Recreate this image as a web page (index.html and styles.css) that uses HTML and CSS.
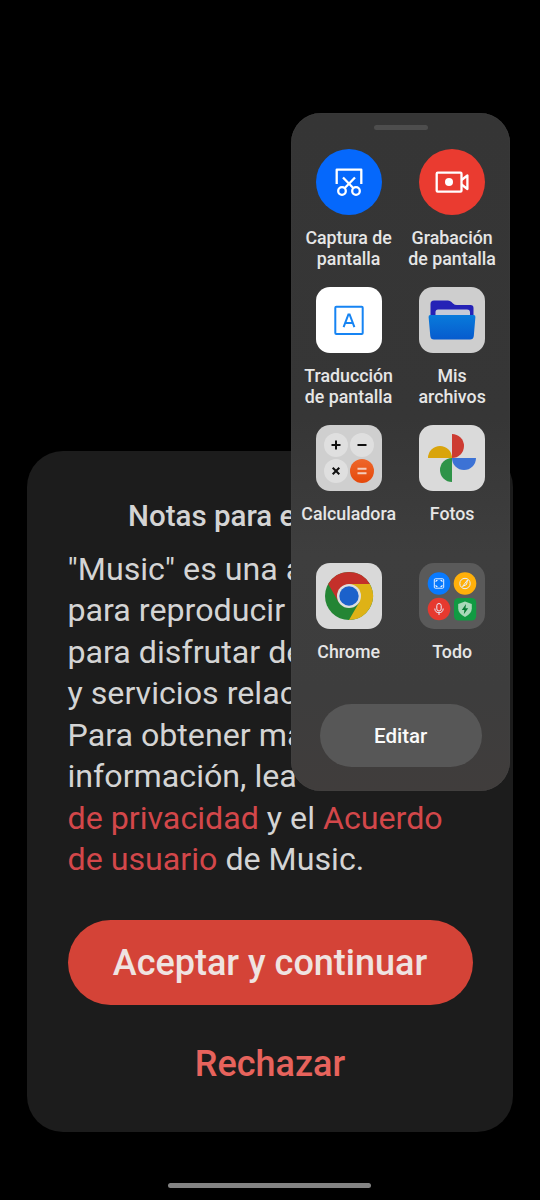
FILE: index.html
```html
<!DOCTYPE html>
<html lang="es">
<head>
<meta charset="utf-8">
<meta name="viewport" content="width=device-width">
<title>Music</title>
<link rel="stylesheet" href="styles.css">
</head>
<body>
<main class="screen">
  <section class="dialog">
    <h1 class="dialog-title">Notas para e</h1>
    <div class="dialog-text">
      <div>"Music" es una a</div>
      <div>para reproducir</div>
      <div>para disfrutar de</div>
      <div>y servicios relac</div>
      <div>Para obtener má</div>
      <div>información, lea</div>
      <div><a class="link">de privacidad</a> y el <a class="link">Acuerdo</a></div>
      <div><a class="link">de usuario</a> de Music.</div>
    </div>
    <button class="accept">Aceptar y continuar</button>
    <button class="reject">Rechazar</button>
  </section>
  <div class="home-bar"></div>

  <aside class="panel">
    <div class="handle"></div>
    <div class="grid">
      <div class="item">
        <svg class="icon" viewBox="0 0 66 66">
          <circle cx="33" cy="33" r="33" fill="#0568fc"/>
          <g fill="none" stroke="#fff" stroke-width="2.3">
            <path d="M20.7 35V20.7H45.3V35" stroke-linejoin="round"/>
            <path d="M27 28.5L37.2 39M39 28.5L28.8 39"/>
            <circle cx="26" cy="42" r="3.8"/><circle cx="40" cy="42" r="3.8"/>
          </g>
        </svg>
        <span class="label">Captura de<br>pantalla</span>
      </div>
      <div class="item">
        <svg class="icon" viewBox="0 0 66 66">
          <circle cx="33" cy="33" r="33" fill="#ea3b30"/>
          <g fill="none" stroke="#fff" stroke-width="2.3" stroke-linejoin="round">
            <rect x="17.7" y="23.7" width="24.8" height="19" rx="1"/>
            <path d="M42.5 31L48.4 26.5V40L42.5 35.5"/>
          </g>
          <circle cx="30" cy="33" r="4" fill="#fff"/>
        </svg>
        <span class="label">Grabación<br>de pantalla</span>
      </div>
      <div class="item">
        <svg class="icon" viewBox="0 0 66 66">
          <rect width="66" height="66" rx="14" fill="#fff"/>
          <g fill="none" stroke="#1684f3" stroke-width="2">
            <rect x="19.3" y="19.7" width="27.4" height="27.4" rx="1"/>
            <path d="M27.6 40.2L32.4 27.4H33.6L38.4 40.2M29.3 36H36.7"/>
          </g>
        </svg>
        <span class="label">Traducción<br>de pantalla</span>
      </div>
      <div class="item">
        <svg class="icon" viewBox="0 0 66 66">
          <defs><linearGradient id="folder" x2="0" y2="1"><stop stop-color="#087bdb"/><stop offset="1" stop-color="#075bce"/></linearGradient></defs>
          <rect width="66" height="66" rx="14" fill="#cecece"/>
          <path d="M11.5 29V17Q11.5 13.5 15 13.5H29Q31 13.5 32.5 15L34 16.5Q35.5 18 38 18H51.5Q54.5 18 54.5 21V30H11.5Z" fill="#2522b6"/>
          <path d="M16.5 28V25Q16.5 22.5 19 22.5H48Q51 22.5 51 25.5V29Z" fill="#c5cad7"/>
          <path d="M11.3 28H54.7Q56.6 28 56.4 30L54.8 49Q54.4 52.5 51 52.5H15Q11.7 52.5 11.3 49L9.6 30Q9.4 28 11.3 28Z" fill="url(#folder)"/>
        </svg>
        <span class="label">Mis<br>archivos</span>
      </div>
      <div class="item">
        <svg class="icon" viewBox="0 0 66 66">
          <defs><linearGradient id="equals" x2="0" y2="1"><stop stop-color="#ee672b"/><stop offset="1" stop-color="#e5480a"/></linearGradient></defs>
          <rect width="66" height="66" rx="14" fill="#cfcfcf"/>
          <g fill="#dfdfdf"><circle cx="20" cy="20" r="12"/><circle cx="46" cy="20" r="12"/><circle cx="20" cy="46" r="12"/></g>
          <circle cx="46" cy="46" r="12" fill="url(#equals)"/>
          <g fill="none" stroke="#101010" stroke-width="2">
            <path d="M15.5 20H24.5M20 15.5V24.5M41.5 20H50.5M16.7 42.7L23.3 49.3M23.3 42.7L16.7 49.3"/>
            <path d="M41.5 43.8H50.5M41.5 48.2H50.5" stroke="#f4cdbd"/>
          </g>
        </svg>
        <span class="label">Calculadora</span>
      </div>
      <div class="item">
        <svg class="icon" viewBox="0 0 66 66">
          <rect width="66" height="66" rx="14" fill="#dadada"/>
          <path d="M33 33V9A12 12 0 0 1 33 33Z" fill="#cd3b32"/>
          <path d="M33 33H57A12 12 0 0 1 33 33Z" fill="#3c72d5"/>
          <path d="M33 33V57A12 12 0 0 1 33 33Z" fill="#2e9348"/>
          <path d="M33 33H9A12 12 0 0 1 33 33Z" fill="#d9a40b"/>
        </svg>
        <span class="label">Fotos</span>
      </div>
      <div class="item">
        <svg class="icon" viewBox="0 0 66 66">
          <rect width="66" height="66" rx="14" fill="#d9d9d9"/>
          <circle cx="33" cy="33" r="24" fill="#248534"/>
          <path d="M33 21H53.8A24 24 0 0 1 33 57L43.4 39Z" fill="#deb216"/>
          <path d="M12.2 21A24 24 0 0 1 53.8 21H33L22.6 39Z" fill="#c4302a"/>
          <circle cx="33" cy="33" r="12" fill="#dedede"/>
          <circle cx="33" cy="33" r="9.7" fill="#1b61cb"/>
        </svg>
        <span class="label">Chrome</span>
      </div>
      <div class="item">
        <svg class="icon" viewBox="0 0 66 66">
          <rect width="66" height="66" rx="15" fill="#5a5a5a"/>
          <circle cx="20" cy="20.5" r="11.3" fill="#087aff"/>
          <circle cx="46" cy="20.5" r="11.3" fill="#ffb00a"/>
          <circle cx="20" cy="46" r="11.3" fill="#e6392f"/>
          <rect x="35" y="35" width="22.2" height="22.5" rx="4.5" fill="#119a42"/>
          <g fill="none" stroke="#e8f0ff" stroke-width="1">
            <rect x="15.3" y="15.8" width="9.4" height="9.4" rx="1"/>
            <path d="M17 19V17.5H18.5M21.5 17.5H23V19M23 22V23.5H21.5M18.5 23.5H17V22"/>
            <circle cx="46" cy="20.5" r="5.2"/>
            <path d="M43.5 23.5L48.5 17M43.5 23.5L47.5 21.5L48.5 17"/>
            <rect x="17.8" y="40.5" width="4.4" height="7.5" rx="2.2"/>
            <path d="M15.8 45.5Q16 49.7 20 49.7Q24 49.7 24.2 45.5M20 49.7V52"/>
          </g>
          <path d="M46 38.5L52.8 41V45.5Q52.8 50.5 46 54Q39.2 50.5 39.2 45.5V41Z" fill="#a9d9b9"/>
          <path d="M47 41L42.8 47H45.4L44.8 51.3L49.2 45.3H46.5Z" fill="#087b34"/>
        </svg>
        <span class="label">Todo</span>
      </div>
    </div>
    <button class="edit">Editar</button>
  </aside>
</main>
</body>
</html>
```
FILE: styles.css
```css
* { box-sizing: border-box; }
body { margin: 0; background: #000; font-family: Roboto, "Liberation Sans", sans-serif; }
button { border: 0; padding: 0; font-family: inherit; font-weight: 500; display: block; }

.screen {
  position: relative;
  width: 540px;
  height: 1200px;
  overflow: hidden;
  padding: 451px 27px 0;
  background: #000;
}
.dialog {
  height: 681px;
  padding: 45px 40px 0;
  border-radius: 36px;
  background: #1c1c1c;
  color: #d4d4d4;
}
.dialog-title {
  margin: 0 0 0 61px;
  font-size: 29.5px;
  line-height: 40px;
  font-weight: 500;
  white-space: nowrap;
}
.dialog-text {
  margin: 12.5px 0 0 0.5px;
  font-size: 32.2px;
  line-height: 41.5px;
  white-space: nowrap;
}
.link { color: #d3474a; }
.accept {
  width: 405px;
  height: 85px;
  margin: 39.5px 0 0 0.5px;
  border-radius: 43px;
  background: #d44337;
  color: #efe3e1;
  font-size: 36px;
}
.reject {
  margin: 35px auto 0;
  background: none;
  color: #e7635c;
  font-size: 36px;
  line-height: 48px;
}
.home-bar {
  width: 203px;
  height: 5px;
  margin: 51px auto 0 141px;
  border-radius: 3px;
  background: #838383;
}

/* Floating sidebar above the dialog */
.panel {
  position: absolute;
  left: 291.4px;
  top: 113.4px;
  width: 219px;
  height: 678px;
  padding: 12px 6px 0 5.5px;
  border-radius: 30px;
  background: linear-gradient(#353535 0, #363636 45%, #3e3e3e 65%, #3d3d3d 85%, #403d3c 100%);
  box-shadow: inset 0 0 1px #555;
}
.handle {
  width: 54px;
  height: 5px;
  margin: 0 auto;
  border-radius: 3px;
  background: #4d4d4d;
}
.grid {
  display: grid;
  grid-template-columns: 103.5px 103.5px;
  grid-auto-rows: 138px;
  margin-top: 19px;
}
.item { display: flex; flex-direction: column; align-items: center; }
.icon { width: 66px; height: 66px; display: block; }
.label {
  margin-top: 11.5px;
  color: #e6e6e6;
  font-size: 17.8px;
  font-weight: 500;
  line-height: 21px;
  text-align: center;
  white-space: nowrap;
}
.edit {
  width: 162px;
  height: 63px;
  margin: 3px auto 0;
  border-radius: 32px;
  background: #575757;
  color: #fafafa;
  font-size: 20.5px;
}
```
